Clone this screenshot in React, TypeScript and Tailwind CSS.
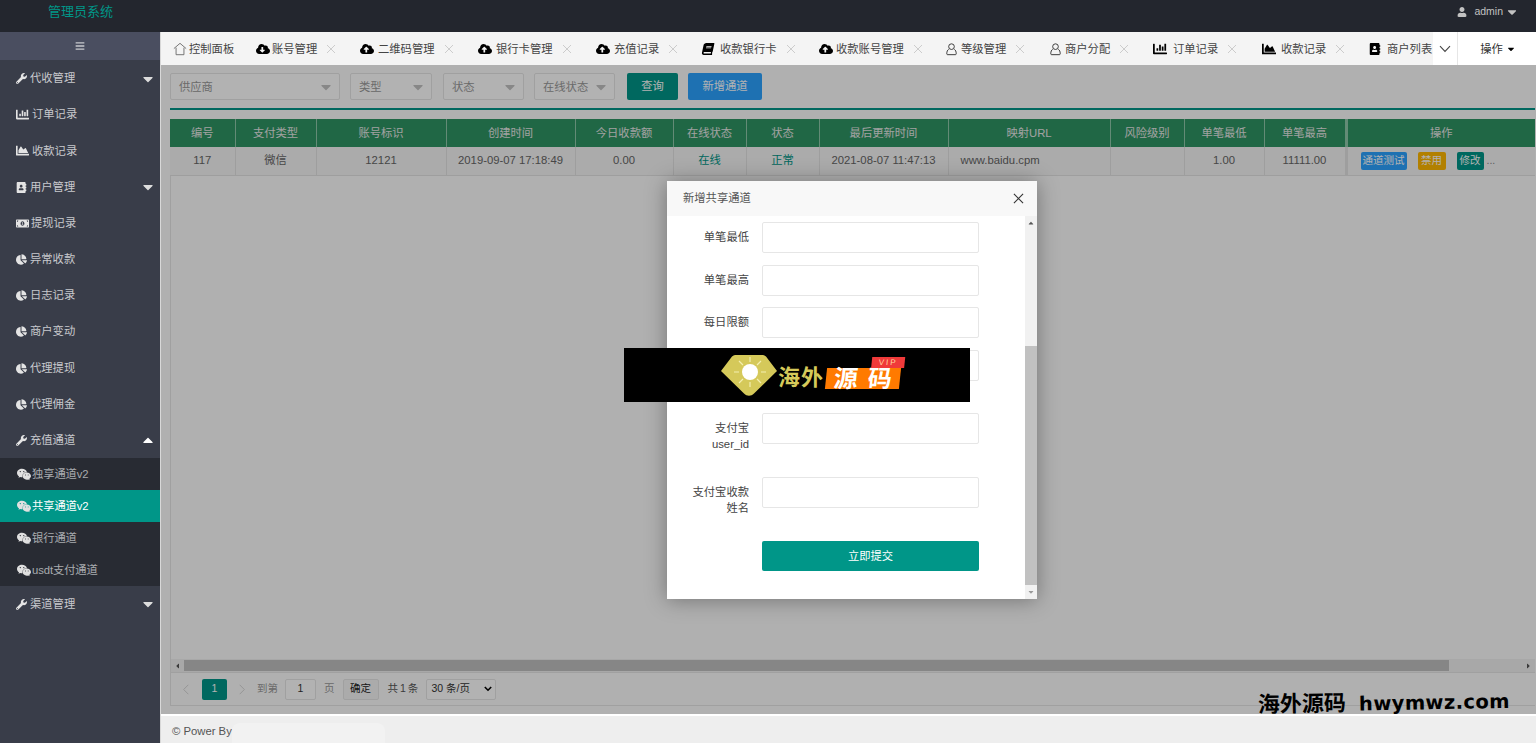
import type { ReactNode } from 'react'
import {
  FaAddressBook,
  FaBars,
  FaBook,
  FaCaretDown,
  FaCaretUp,
  FaChartArea,
  FaChartBar,
  FaChartPie,
  FaCloudDownloadAlt,
  FaCloudUploadAlt,
  FaMoneyBillAlt,
  FaUser,
  FaWeixin,
  FaWrench,
} from 'react-icons/fa'

const HomeIcon = () => (
  <svg viewBox="0 0 16 16" className="w-[14px] h-[14px] text-[#666]" fill="none" stroke="currentColor" strokeWidth="1">
    <path d="M1 7.5 8 1.5l7 6M3.5 6.5V14.5h9V6.5" />
  </svg>
)

const PersonIcon = () => (
  <svg viewBox="0 0 14 16" className="w-[11px] h-[14px] text-[#333]" fill="none" stroke="currentColor" strokeWidth="1.2">
    <circle cx="7" cy="5" r="3.6" />
    <path d="M3.5 8.2C1.8 9.5 1 11 1 14.2c0 .7.4 1 1 1h10c.6 0 1-.3 1-1 0-3.2-.8-4.7-2.5-6" />
  </svg>
)

const tabs: { icon: ReactNode; label: string; className: string; gap: string; close?: boolean }[] = [
  { icon: <HomeIcon />, label: '控制面板', className: 'ml-[12px] w-[83px]', gap: 'gap-[2px]' },
  { icon: <FaCloudDownloadAlt className="text-[14px] text-black" />, label: '账号管理', className: 'w-[104px]', gap: 'gap-[2px]', close: true },
  { icon: <FaCloudUploadAlt className="text-[14px] text-black" />, label: '二维码管理', className: 'w-[118px]', gap: 'gap-[4px]', close: true },
  { icon: <FaCloudUploadAlt className="text-[14px] text-black" />, label: '银行卡管理', className: 'w-[118px]', gap: 'gap-[4px]', close: true },
  { icon: <FaCloudUploadAlt className="text-[14px] text-black" />, label: '充值记录', className: 'w-[105px]', gap: 'gap-[4px]', close: true },
  { icon: <FaBook className="text-[12px] text-black -skew-x-12" />, label: '收款银行卡', className: 'w-[118px]', gap: 'gap-[5px]', close: true },
  { icon: <FaCloudUploadAlt className="text-[14px] text-black" />, label: '收款账号管理', className: 'w-[125px]', gap: 'gap-[3px]', close: true },
  { icon: <PersonIcon />, label: '等级管理', className: 'w-[104px]', gap: 'gap-[3px]', close: true },
  { icon: <PersonIcon />, label: '商户分配', className: 'w-[105px]', gap: 'gap-[3px]', close: true },
  { icon: <FaChartBar className="text-[14px] text-black" />, label: '订单记录', className: 'w-[109px]', gap: 'gap-[6px]', close: true },
  { icon: <FaChartArea className="text-[14px] text-black" />, label: '收款记录', className: 'w-[106px]', gap: 'gap-[5px]', close: true },
  { icon: <FaAddressBook className="text-[12px] text-black" />, label: '商户列表', className: 'w-[66px]', gap: 'gap-[5px]' },
]

const navTop: { icon: ReactNode; label: string; iconBox: string; caret?: 'down' | 'up' }[] = [
  { icon: <FaWrench className="text-[11px]" />, label: '代收管理', iconBox: 'w-[14px]', caret: 'down' },
  { icon: <FaChartBar className="text-[13px]" />, label: '订单记录', iconBox: 'w-[16px]' },
  { icon: <FaChartArea className="text-[13px]" />, label: '收款记录', iconBox: 'w-[16px]' },
  { icon: <FaAddressBook className="text-[11px]" />, label: '用户管理', iconBox: 'w-[14px]', caret: 'down' },
  { icon: <FaMoneyBillAlt className="text-[13px]" />, label: '提现记录', iconBox: 'w-[15px]' },
  { icon: <FaChartPie className="text-[11px]" />, label: '异常收款', iconBox: 'w-[14px]' },
  { icon: <FaChartPie className="text-[11px]" />, label: '日志记录', iconBox: 'w-[14px]' },
  { icon: <FaChartPie className="text-[11px]" />, label: '商户变动', iconBox: 'w-[14px]' },
  { icon: <FaChartPie className="text-[11px]" />, label: '代理提现', iconBox: 'w-[14px]' },
  { icon: <FaChartPie className="text-[11px]" />, label: '代理佣金', iconBox: 'w-[14px]' },
  { icon: <FaWrench className="text-[11px]" />, label: '充值通道', iconBox: 'w-[14px]', caret: 'up' },
]

const navSub = ['独享通道v2', '共享通道v2', '银行通道', 'usdt支付通道']

const columns = [
  { label: '编号', className: 'w-[65px]' },
  { label: '支付类型', className: 'w-[81px]' },
  { label: '账号标识', className: 'w-[130px]' },
  { label: '创建时间', className: 'w-[129px]' },
  { label: '今日收款额', className: 'w-[98px]' },
  { label: '在线状态', className: 'w-[73px]' },
  { label: '状态', className: 'w-[73px]' },
  { label: '最后更新时间', className: 'w-[129px]' },
  { label: '映射URL', className: 'w-[162px]' },
  { label: '风险级别', className: 'w-[74px]' },
  { label: '单笔最低', className: 'w-[80px]' },
  { label: '单笔最高', className: 'w-[82px]' },
]

const row = ['117', '微信', '12121', '2019-09-07 17:18:49', '0.00', '在线', '正常', '2021-08-07 11:47:13', 'www.baidu.cpm', '', '1.00', '11111.00']

const fields: { label: ReactNode; className: string }[] = [
  { label: '单笔最低', className: 'h-[43px]' },
  { label: '单笔最高', className: 'h-[42px]' },
  { label: '每日限额', className: 'h-[43px]' },
  { label: '', className: 'h-[63px]' },
  { label: <>支付宝<br />user_id</>, className: 'h-[64px]' },
  { label: <>支付宝收款<br />姓名</>, className: 'h-[64px]' },
]

const FilterSelect = ({ label, className }: { label: string; className: string }) => (
  <div className={`h-[27px] flex items-center justify-between pl-[8px] pr-[5px] border border-[#e6e6e6] rounded-[2px] bg-white text-[#999] ${className}`}>
    <span className="pt-[1px]">{label}</span>
    <FaCaretDown className="text-[16px] text-[#c2c2c2]" />
  </div>
)

const CloseMark = () => (
  <svg viewBox="0 0 10 10" className="ml-[9px] w-[10px] h-[10px] text-[#cccccc]" fill="none" stroke="currentColor" strokeWidth="1">
    <path d="m1 1 8 8M9 1 1 9" />
  </svg>
)

const App = () => {
  return (
    <div className="h-[743px] w-[1536px] overflow-hidden flex flex-col relative bg-white font-['Liberation_Sans','Noto_Sans_CJK_SC',sans-serif] text-[11.3px]">
      {/* top bar */}
      <header className="h-[32px] shrink-0 bg-[#23262e] flex justify-between pl-[48px] pr-[17px]">
        <span className="text-[#009688] text-[13px] leading-[24px]">管理员系统</span>
        <div className="flex items-center h-[24px] gap-[2px] text-[#c2c2c2] text-[10.5px]">
          <FaUser className="text-[10px] mr-[5px]" />
          <span>admin</span>
          <FaCaretDown className="text-[14px]" />
        </div>
      </header>

      <div className="flex-1 flex min-h-0">
        {/* side nav */}
        <aside className="w-[161px] shrink-0 bg-[#393d49] border-r border-r-[#d8d8d8] text-[#c8c9cd]">
          <div className="h-[28px] bg-[#4a4e60] flex items-center justify-center">
            <FaBars className="text-[10px]" />
          </div>
          {navTop.map((item) => (
            <div key={item.label} className="h-[36.2px] flex items-center pl-[16px] pr-[4px] pt-[1px]">
              <span className={`flex justify-start text-[#e4e4e4] ${item.iconBox}`}>{item.icon}</span>
              <span>{item.label}</span>
              {item.caret === 'down' && <FaCaretDown className="ml-auto text-[16px] text-[#ddd]" />}
              {item.caret === 'up' && <FaCaretUp className="ml-auto text-[16px] text-white" />}
            </div>
          ))}
          <div className="bg-[#282b33]">
            {navSub.map((label, i) => (
              <div
                key={label}
                className={i === 1 ? 'h-[32px] flex items-center pl-[16px] pt-[1px] bg-[#009688] text-white' : 'h-[32px] flex items-center pl-[16px] pt-[1px] text-[#a9abaf]'}
              >
                <FaWeixin className="text-[13px] w-[16px] text-[#e0e0e0]" />
                <span className="tracking-[-0.1px]">{label}</span>
              </div>
            ))}
          </div>
          <div className="h-[36px] flex items-center pl-[16px] pr-[4px]">
            <span className="w-[14px] text-[#e4e4e4]"><FaWrench className="text-[11px]" /></span>
            <span>渠道管理</span>
            <FaCaretDown className="ml-auto text-[16px] text-[#ddd]" />
          </div>
        </aside>

        <main className="flex-1 min-w-0 flex flex-col">
          {/* tab strip */}
          <div className="h-[33px] shrink-0 flex text-[#444]">
            <div className="w-[1272px] bg-[#f4f4f4] flex items-center overflow-hidden">
              {tabs.map((tab) => (
                <div key={tab.label} className={`shrink-0 flex items-center whitespace-nowrap pt-[1px] ${tab.className}`}>
                  <span className={`flex items-center ${tab.gap}`}>
                    <span className="w-[14px] flex justify-center">{tab.icon}</span>
                    <span className="pt-[1px]">{tab.label}</span>
                  </span>
                  {tab.close && <CloseMark />}
                </div>
              ))}
            </div>
            <div className="w-[25px] bg-white border-r border-r-[#e6e6e6] flex items-center justify-center">
              <svg viewBox="0 0 12 8" className="w-[12px] h-[8px] text-[#444]" fill="none" stroke="currentColor" strokeWidth="1.1">
                <path d="M1 1.2 6 6.5l5-5.3" />
              </svg>
            </div>
            <div className="flex-1 bg-white flex items-center justify-center gap-[3px] pl-[2px] pt-[1px] text-[#333]">
              <span>操作</span>
              <FaCaretDown className="text-[10px] text-black" />
            </div>
          </div>

          {/* page body, dimmed by the modal shade */}
          <div className="flex-1 min-h-0 relative bg-[#fdfdfd] pl-[9px] flex flex-col">
            <div className="flex items-center h-[27px] mt-[8px] shrink-0">
              <FilterSelect label="供应商" className="w-[170px] mr-[10px]" />
              <FilterSelect label="类型" className="w-[82px] mr-[11px]" />
              <FilterSelect label="状态" className="w-[81px] mr-[10px]" />
              <FilterSelect label="在线状态" className="w-[81px] mr-[12px]" />
              <div className="w-[51px] h-[27px] rounded-[2px] bg-[#009688] text-white flex items-center justify-center mr-[10px]">查询</div>
              <div className="w-[74px] h-[27px] rounded-[2px] bg-[#2ba3ff] text-white flex items-center justify-center">新增通道</div>
            </div>
            <div className="h-[2px] mt-[8px] mr-[1px] bg-[#009688] shrink-0" />

            <div className="mt-[9px] flex-1 min-h-0 flex flex-col border-l border-b border-[#e6e6e6] mr-[1px]">
              <div className="flex-1 min-h-0">
                <table className="table-fixed border-collapse text-center w-[1365px] -ml-[1px]">
                  <thead>
                    <tr className="h-[28px] bg-[#2f9463] text-[#e8e8e8]">
                      {columns.map((col) => (
                        <th key={col.label} className={`font-normal border-r border-r-[#8fc7aa] p-0 ${col.className}`}>{col.label}</th>
                      ))}
                      <th className="font-normal p-0 border-l-[3px] border-l-[#8fc7aa]">操作</th>
                    </tr>
                  </thead>
                  <tbody>
                    <tr className="h-[28px] bg-[#f5f5f5] text-[#666] border-b border-b-[#e2e2e2]">
                      {row.map((cell, i) => (
                        <td
                          key={i}
                          className={
                            i === 5 || i === 6
                              ? 'border-r border-r-[#e2e2e2] p-0 text-[#009688]'
                              : i === 8
                                ? 'border-r border-r-[#e2e2e2] p-0 pl-[12px] text-left'
                                : 'border-r border-r-[#e2e2e2] p-0'
                          }
                        >
                          {cell}
                        </td>
                      ))}
                      <td className="p-0 border-l-[3px] border-l-[#e2e2e2]">
                        <div className="flex items-center pl-[13px] text-[10.5px] text-white">
                          <span className="w-[46px] h-[18px] mr-[11px] rounded-[2px] bg-[#2ba3ff] flex items-center justify-center">通道测试</span>
                          <span className="w-[28px] h-[18px] mr-[11px] rounded-[2px] bg-[#ffb800] flex items-center justify-center">禁用</span>
                          <span className="w-[27px] h-[18px] mr-[3px] rounded-[2px] bg-[#009688] flex items-center justify-center">修改</span>
                          <span className="text-[#888]">...</span>
                        </div>
                      </td>
                    </tr>
                  </tbody>
                </table>
              </div>

              {/* horizontal scrollbar */}
              <div className="h-[13px] shrink-0 flex items-center bg-[#f1f1f1]">
                <div className="w-[13px] flex justify-center text-[#555]"><FaCaretDown className="text-[8px] rotate-90" /></div>
                <div className="w-[1265px] h-[11px] bg-[#c1c1c1]" />
                <div className="flex-1 flex justify-end pr-[3px] text-[#555]"><FaCaretDown className="text-[8px] -rotate-90" /></div>
              </div>

              {/* pager */}
              <div className="h-[33px] shrink-0 flex items-center border-t border-t-[#e6e6e6] text-[#999] text-[10.5px]">
                <svg viewBox="0 0 8 14" className="ml-[11px] w-[8px] h-[11px] text-[#d2d2d2]" fill="none" stroke="currentColor" strokeWidth="1.2"><path d="M7 1 1 7l6 6" /></svg>
                <div className="ml-[12px] w-[25px] h-[21px] rounded-[2px] bg-[#009688] text-white flex items-center justify-center">1</div>
                <svg viewBox="0 0 8 14" className="ml-[11px] w-[8px] h-[11px] text-[#d2d2d2]" fill="none" stroke="currentColor" strokeWidth="1.2"><path d="m1 1 6 6-6 6" /></svg>
                <span className="ml-[11px]">到第</span>
                <div className="ml-[7px] w-[31px] h-[21px] border border-[#e6e6e6] rounded-[2px] text-[#333] bg-white flex items-center justify-center">1</div>
                <span className="ml-[8px]">页</span>
                <div className="ml-[8px] w-[36px] h-[21px] border border-[#e6e6e6] rounded-[2px] text-[#222] bg-[#f5f5f5] flex items-center justify-center">确定</div>
                <span className="ml-[9px] w-[30px] whitespace-nowrap tracking-[-0.5px] text-[#555]">共 1 条</span>
                <div className="ml-[8px] w-[70px] h-[21px] border border-[#e6e6e6] rounded-[2px] text-[#333] bg-white flex items-center justify-between pl-[5px] pr-[3px]">
                  <span>30 条/页</span>
                  <svg viewBox="0 0 10 7" className="w-[8px] h-[6px] text-black" fill="none" stroke="currentColor" strokeWidth="2"><path d="m1 1 4 4 4-4" /></svg>
                </div>
              </div>
            </div>
            <div className="h-[8px] shrink-0" />

            <div className="absolute inset-0 bg-black/30" />

            {/* dialog */}
            <div className="absolute left-[506px] top-[116px] w-[370px] h-[418px] bg-white shadow-[0_1px_20px_rgba(0,0,0,0.35)] flex flex-col">
              <div className="h-[35px] shrink-0 bg-[#f8f8f8] flex items-center justify-between pl-[16px] pr-[13px] text-[#555]">
                <span>新增共享通道</span>
                <svg viewBox="0 0 12 12" className="w-[11px] h-[11px] text-[#333]" fill="none" stroke="currentColor" strokeWidth="1.2"><path d="m1 1 10 10M11 1 1 11" /></svg>
              </div>
              <div className="flex-1 min-h-0 flex">
                <div className="flex-1 pt-[6px]">
                  {fields.map((field, i) => (
                    <div key={i} className={`flex items-start ${field.className}`}>
                      <label className="w-[82px] shrink-0 text-right text-[#444] leading-[16px] pt-[7px]">{field.label}</label>
                      <input aria-label={`field-${i}`} className="ml-[13px] w-[217px] h-[31px] border border-[#e6e6e6] rounded-[2px] bg-white" />
                    </div>
                  ))}
                  <div className="ml-[95px] w-[217px] h-[30px] rounded-[2px] bg-[#009688] text-white flex items-center justify-center">立即提交</div>
                </div>
                <div className="w-[12px] bg-[#f1f1f1] flex flex-col">
                  <div className="h-[14px] flex items-center justify-center text-[#555]"><FaCaretUp className="text-[8px]" /></div>
                  <div className="mt-[116px] h-[239px] bg-[#c1c1c1]" />
                  <div className="flex-1 flex items-center justify-center text-[#999]"><FaCaretDown className="text-[8px]" /></div>
                </div>
              </div>
            </div>
          </div>

          <footer className="h-[29px] shrink-0 bg-[#eeeeee] border-t-2 border-t-white flex items-center pl-[11px] text-[#555] relative">
            <span className="mt-[3px]">© Power By</span>
            <div className="mt-[7px] w-[153px] h-[20px] rounded-t-[8px] bg-[#f2f2f2]" />
          </footer>
        </main>
      </div>

      {/* promo banner pasted over the capture */}
      <div className="absolute left-[624px] top-[348px] w-[346px] h-[54px] bg-black flex items-center pl-[97px]">
        <svg viewBox="0 0 56 42" className="w-[56px] h-[42px] shrink-0">
          <path d="M14 1h28c1 0 2 .5 3 1.500L56 17 33 39.500c-3 3-7 3-10 0L0 17 11 2.500c1-1 2-1.500 3-1.500Z" fill="#d5c95a" />
          <circle cx="29" cy="18" r="8" fill="#fff" />
          <path d="M29 3v5M29 28v5M13 18h5M40 18h5M18 7l4 4M40 7l-4 4M18 29l4-4M40 29l-4-4" stroke="#f4efb0" strokeWidth="1.2" />
        </svg>
        <span className="ml-[1px] mt-[5px] text-[#d5c95a] text-[22px] font-bold leading-none tracking-[1px]">海外</span>
        <div className="relative ml-[2px] w-[74px] h-[21px] mt-[6px] bg-[#ff7a00] -skew-x-6 flex items-center justify-center gap-[10px] text-white text-[24px] font-bold leading-none">
          <span>源</span>
          <span>码</span>
          <span className="absolute right-[-3px] top-[-11px] h-[11px] w-[33px] bg-[#f03a3a] text-[8px] text-[#ffd9a0] leading-[11px] tracking-[2px] text-center font-normal">VIP</span>
        </div>
      </div>

      {/* site watermark */}
      <div className="absolute left-[1258px] top-[690px] -rotate-1 whitespace-nowrap font-bold text-black leading-[26px] font-['DejaVu_Sans','Noto_Sans_CJK_SC',sans-serif]">
        <span className="text-[22px]">海外源码</span>
        <span className="ml-[13px] text-[19.5px] tracking-[0.4px]">hwymwz.com</span>
      </div>
    </div>
  )
}

export default App
